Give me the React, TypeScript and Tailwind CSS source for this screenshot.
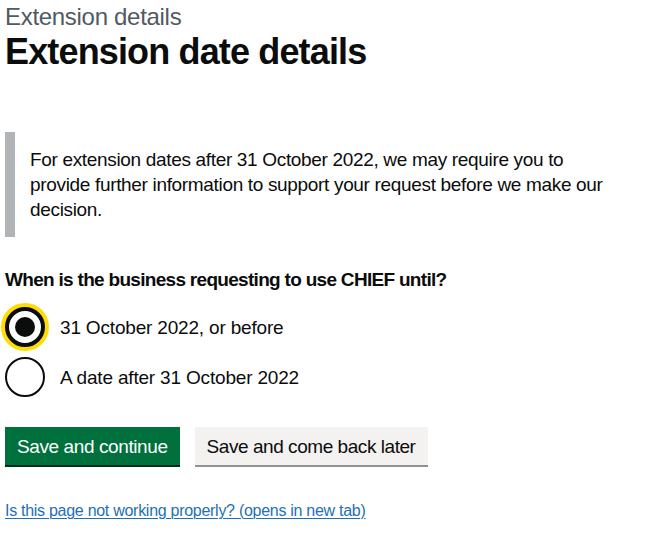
export default function App() {
  return (
    <div className="min-h-[534px] bg-white px-[5px] text-[#0b0c0c] font-['Liberation_Sans',Arial,sans-serif]">
      <span className="block pt-[2px] text-[24px] leading-[30px] tracking-[-0.3px] text-[#505a5f]">Extension details</span>
      <h1 className="mb-[60px] text-[36px] font-bold leading-[40px] tracking-[-0.85px]">Extension date details</h1>

      <div className="mb-[30px] border-l-[10px] border-[#b1b4b6] py-[15px] pl-[15px] text-[19px] leading-[25px] tracking-[-0.33px]">
        For extension dates after 31 October 2022, we may require you to
        <br />
        provide further information to support your request before we make our
        <br />
        decision.
      </div>

      <fieldset className="mb-[30px]">
        <legend className="mb-[15px] text-[19px] font-bold leading-[25px] tracking-[-0.7px]">
          When is the business requesting to use CHIEF until?
        </legend>
        <div className="flex flex-col gap-[10px] tracking-[-0.18px]">
          <label className="flex items-center gap-[15px]">
            <span className="flex h-[40px] w-[40px] items-center justify-center rounded-full border-[4px] border-[#0b0c0c] bg-white shadow-[0_0_0_4px_#ffdd00]">
              <span className="h-[20px] w-[20px] rounded-full bg-[#0b0c0c]" />
            </span>
            <span className="text-[19px] leading-[25px]">31 October 2022, or before</span>
          </label>
          <label className="flex items-center gap-[15px]">
            <span className="h-[40px] w-[40px] rounded-full border-2 border-[#0b0c0c] bg-white" />
            <span className="text-[19px] leading-[25px]">A date after 31 October 2022</span>
          </label>
        </div>
      </fieldset>

      <div className="mb-[34px] flex gap-[15px]">
        <button className="border-2 border-transparent bg-[#00703c] px-[10px] pb-[7px] pt-[8px] text-[19px] leading-[19px] tracking-[-0.4px] text-white shadow-[0_2px_0_#002d18]">
          Save and continue
        </button>
        <button className="border-2 border-transparent bg-[#f3f2f1] px-[10px] pb-[7px] pt-[8px] text-[19px] leading-[19px] tracking-[-0.45px] text-[#0b0c0c] shadow-[0_2px_0_#929191]">
          Save and come back later
        </button>
      </div>

      <a href="#" className="text-[16px] leading-[20px] tracking-[-0.28px] text-[#1d70b8] underline underline-offset-[2px] decoration-1">
        Is this page not working properly? (opens in new tab)
      </a>
    </div>
  );
}
